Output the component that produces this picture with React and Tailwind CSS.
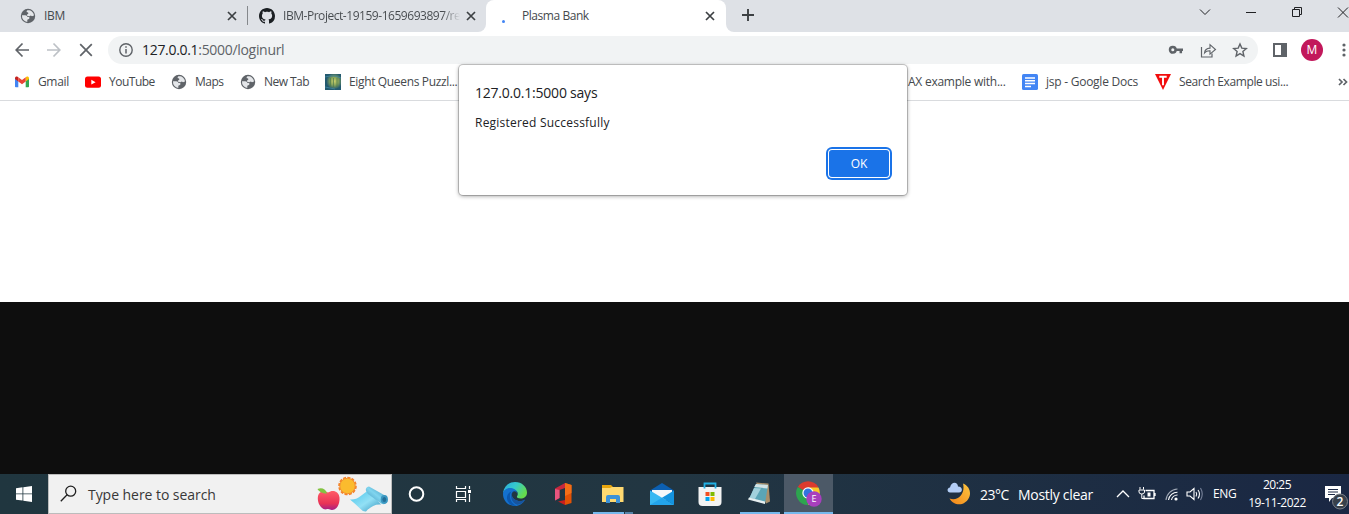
import React from "react";

const Globe = () => (
  <svg viewBox="0 0 16 16" className="h-4 w-4 shrink-0">
    <circle cx="8" cy="8" r="7.200" fill="#5f6368" />
    <path d="M2 7.300h3.200c1.500 0 2 .8 2.200 1.600l1.900.2v1.700l-2 .9v2.200A6 6 0 0 1 2 7.300z" fill="#e4e6e9" />
    <path d="M7 2.400c3.500-.7 6.500 1.500 7 5l-2 .9-1.200-.7-1.300.7-2.200-.3-.3-1.500 1.300-.8-.2-1.200-1.600-.4z" fill="#e4e6e9" />
  </svg>
);

const Close = () => (
  <svg viewBox="0 0 10 10" className="h-[10px] w-[10px] shrink-0">
    <path d="M1 1l8 8M9 1L1 9" stroke="#3c4043" strokeWidth="1.7" />
  </svg>
);

const GitHub = () => (
  <svg viewBox="0 0 16 16" className="h-4 w-4 shrink-0">
    <path fill="#1b1f23" d="M8 0C3.58 0 0 3.580 0 8c0 3.540 2.290 6.530 5.470 7.590.4.070.55-.170.55-.380 0-.190-.010-.820-.010-1.490-2.010.370-2.530-.490-2.690-.940-.090-.230-.480-.940-.820-1.130-.280-.150-.680-.520-.010-.530.630-.010 1.080.580 1.230.820.720 1.210 1.870.870 2.330.660.070-.520.280-.870.510-1.070-1.780-.200-3.640-.890-3.640-3.950 0-.870.310-1.590.820-2.150-.080-.200-.360-1.020.080-2.120 0 0 .670-.210 2.200.820.640-.180 1.320-.270 2-.270s1.360.090 2 .270c1.530-1.040 2.200-.820 2.200-.820.440 1.100.160 1.920.080 2.120.510.560.820 1.270.820 2.150 0 3.070-1.870 3.750-3.650 3.950.290.250.540.730.540 1.480 0 1.070-.010 1.930-.010 2.200 0 .210.150.460.550.380A8.010 8.010 0 0 0 16 8c0-4.420-3.580-8-8-8z" />
  </svg>
);

const Gmail = () => (
  <svg viewBox="0 0 16 16" className="h-4 w-4 shrink-0">
    <path d="M1 4v8.500q0 .8.8.8H4.300V6.700z" fill="#4285f4" />
    <path d="M15 4v8.500q0 .8-.8.8H11.700V6.700z" fill="#34a853" />
    <path d="M1 4.500v-.3C1 2.600 2.700 2 3.800 2.900L4.300 3.300V7.500L1 5z" fill="#c5221f" />
    <path d="M15 4.500v-.3c0-1.600-1.700-2.200-2.800-1.300l-.5.400V7.500L15 5z" fill="#fbbc04" />
    <path d="M4.300 3.300L8 6.100l3.700-2.800v4.200L8 10.300 4.300 7.500z" fill="#ea4335" />
  </svg>
);

const YouTube = () => (
  <svg viewBox="0 0 16 16" className="h-4 w-4 shrink-0">
    <rect x="0" y="2.500" width="16" height="11.300" rx="2.500" fill="#f00" />
    <path d="M6.300 5.700v4.900l4.300-2.450z" fill="#fff" />
  </svg>
);

const Queens = () => (
  <svg viewBox="0 0 16 16" className="h-4 w-4 shrink-0">
    <defs>
      <radialGradient id="glow" cx=".58" cy=".45" r=".5">
        <stop offset="0" stopColor="#c9cf6c" />
        <stop offset=".5" stopColor="#86a35a" />
        <stop offset="1" stopColor="#235a70" />
      </radialGradient>
    </defs>
    <rect width="16" height="16" fill="url(#glow)" />
    <path d="M0 3l5-1 5 0 6 2M0 13l5 1 5 1" fill="none" stroke="#4186a0" strokeWidth=".8" />
    <path d="M5.500 4v9M8.500 4v9M12 4v9" stroke="#4c7a4c" strokeWidth=".7" />
  </svg>
);

const Docs = () => (
  <svg viewBox="0 0 16 16" className="h-4 w-4 shrink-0">
    <rect width="16" height="16" rx="1.600" fill="#4285f4" />
    <path d="M3 4h10M3 6.800h10M3 9.600h10M3 12.400h6" stroke="#fff" strokeWidth="1.500" />
  </svg>
);

const TutorialMark = () => (
  <svg viewBox="0 0 16 16" className="h-4 w-4 shrink-0">
    <path d="M0 0h16L8 16z" fill="#f20d0d" />
    <path d="M4.300 2.800h7.400M8 2.800v8.500" stroke="#fff" strokeWidth="1.900" />
  </svg>
);

function Bookmark({ icon, label, width, tracking }) {
  return (
    <div className={`flex shrink-0 items-center gap-2 ${width}`}>
      {icon}
      <span className={`whitespace-nowrap ${tracking}`}>{label}</span>
    </div>
  );
}

function TabStrip() {
  return (
    <div className="flex h-8 bg-white text-[12px] text-[#45494d]">
      <div className="flex w-[486px] rounded-br-lg bg-[#dee1e6]">
        <div className="flex h-[31px] w-[247px] items-center pr-[10px] pl-5">
          <Globe />
          <span className="ml-2 flex-1 tracking-[-0.3px]">IBM</span>
          <Close />
        </div>
        <div className="mt-[6px] h-[19px] w-px bg-[#85888c]" />
        <div className="flex h-[31px] flex-1 items-center pr-[10px] pl-[11px]">
          <GitHub />
          <span className="ml-2 bg-gradient-to-r from-[#45494d] from-90% to-[#dee1e6] bg-clip-text whitespace-nowrap text-transparent tracking-[-0.46px]">
            IBM-Project-19159-1659693897/re
          </span>
          <span className="flex-1" />
          <Close />
        </div>
      </div>
      <div className="flex w-[240px] bg-[#dee1e6]">
        <div className="flex h-8 w-full items-center rounded-t-lg bg-white pr-[11px] pb-px pl-4">
          <span className="mt-[12px] h-[3px] w-[3px] rounded-full bg-[#4285f4]" />
          <span className="ml-[17px] flex-1 tracking-[-0.45px]">Plasma Bank</span>
          <Close />
        </div>
      </div>
      <div className="flex flex-1 rounded-bl-lg bg-[#dee1e6] pl-[16px]">
        <svg viewBox="0 0 12 12" className="mt-[9px] h-3 w-3">
          <path d="M6 0v12M0 6h12" stroke="#3c4043" strokeWidth="1.900" />
        </svg>
        <span className="flex-1" />
        <svg viewBox="0 0 150 24" className="h-6 w-[150px]" fill="none" stroke="#202124">
          <path d="M1 9.500l5 5 5-5" />
          <path d="M47 12.500h10" />
          <path d="M93.500 9.500h7v7h-7zM95.500 9.500v-2h7v7h-2" />
          <path d="M139 7.500l10 10M149 7.500l-10 10" />
        </svg>
      </div>
    </div>
  );
}

function AddressBar() {
  return (
    <div className="flex h-9 items-center bg-white pl-[15px]">
      <svg viewBox="0 0 80 16" className="h-4 w-20" fill="none" strokeWidth="1.700">
        <path d="M14 8H1.500M7.500 1.500L1.200 8l6.300 6.500" stroke="#5f6368" />
        <path d="M32 8h12.500M38.500 1.500L44.800 8l-6.300 6.500" stroke="#bdc1c6" />
        <path d="M65.200 2.200l11.600 11.600M76.800 2.200L65.200 13.800" stroke="#5f6368" />
      </svg>
      <div className="ml-[13px] flex h-7 w-[1150px] items-center rounded-full bg-[#f1f3f4] pl-[11px]">
        <svg viewBox="0 0 14 14" className="h-[14px] w-[14px]" fill="none" stroke="#5f6368">
          <circle cx="7" cy="7" r="6.200" strokeWidth="1.400" />
          <path d="M7 6v4.500M7 3.300v1.500" strokeWidth="1.500" />
        </svg>
        <span className="mb-px ml-[9px] flex-1 text-[14px] tracking-[-0.31px] text-[#5f6368]">
          <span className="text-[#202124]">127.0.0.1</span>:5000/loginurl
        </span>
        <svg viewBox="0 0 90 20" className="h-5 w-[90px]" fill="none" stroke="#5f6368">
          <circle cx="4.800" cy="9.800" r="2.800" strokeWidth="2.500" />
          <path d="M8 9.800h7M12.800 9.800v3.400" strokeWidth="2.500" />
          <path d="M33.500 7v10h10.500v-3.500" strokeWidth="1.200" />
          <path d="M36.500 13q.5-4.700 5.500-4.900V4.700l5.500 4.800-5.500 4.600v-3.300q-3.500-.2-5.500 2.200z" strokeWidth="1.100" />
          <path d="M72 4l1.800 4.100 4.500.4-3.400 3 1 4.500-3.900-2.400-3.900 2.400 1-4.500-3.400-3 4.500-.4z" strokeWidth="1.400" />
        </svg>
      </div>
      <svg viewBox="0 0 14 14" className="ml-[15px] h-[14px] w-[14px]">
        <path d="M0 0h14v14H0zM2 2v10h6V2z" fill="#5f6368" fillRule="evenodd" />
      </svg>
      <span className="ml-[14px] flex h-[22px] w-[22px] items-center justify-center rounded-full bg-[#c2185b] text-[12px] font-medium text-white">
        M
      </span>
      <svg viewBox="0 0 4 14" className="ml-[19px] h-[14px] w-1" fill="#5f6368">
        <circle cx="2" cy="2" r="1.600" />
        <circle cx="2" cy="7" r="1.600" />
        <circle cx="2" cy="12" r="1.600" />
      </svg>
    </div>
  );
}

function Bookmarks() {
  return (
    <div className="flex h-[33px] items-center border-b border-[#d9dbde] bg-white pb-[4px] pl-[14px] text-[12px] text-[#45494d]">
      <Bookmark icon={<Gmail />} label="Gmail" width="w-[71px]" tracking="tracking-[-0.35px]" />
      <Bookmark icon={<YouTube />} label="YouTube" width="w-[86px]" tracking="tracking-[-0.5px]" />
      <Bookmark icon={<Globe />} label="Maps" width="w-[69px]" tracking="tracking-[-0.5px]" />
      <Bookmark icon={<Globe />} label="New Tab" width="w-[85px]" tracking="tracking-[-0.55px]" />
      <Bookmark icon={<Queens />} label="Eight Queens Puzzl..." width="w-[581px]" tracking="tracking-[-0.35px]" />
      <div className="w-[116px] shrink-0 pl-[2px] whitespace-nowrap tracking-[-0.25px]">AX example with...</div>
      <Bookmark icon={<Docs />} label="jsp - Google Docs" width="w-[133px]" tracking="tracking-[-0.25px]" />
      <Bookmark icon={<TutorialMark />} label="Search Example usi..." width="w-[183px]" tracking="tracking-[-0.4px]" />
      <svg viewBox="0 0 10 8" className="h-2 w-[10px]" fill="none" stroke="#5f6368" strokeWidth="1.700">
        <path d="M1 1l3 3-3 3M5.500 1l3 3-3 3" />
      </svg>
    </div>
  );
}

function AlertDialog() {
  return (
    <div className="absolute top-[65px] left-[459px] flex h-[130px] w-[448px] flex-col rounded-[4px] bg-white px-4 pt-[18px] pb-4 text-[#202124] shadow-[0_0_0_1px_rgba(0,0,0,0.18),0_1px_4px_rgba(0,0,0,0.4)]">
      <h1 className="text-[14px] leading-5 tracking-[-0.22px]">127.0.0.1:5000 says</h1>
      <p className="mt-[11px] text-[12px] leading-[18px] tracking-[0.22px]">Registered Successfully</p>
      <button className="mt-[18px] mr-[2px] flex h-[27px] w-[60px] shrink-0 items-center justify-center self-end rounded-[3px] bg-[#1a73e8] text-[12px] text-white shadow-[0_0_0_1px_#fff,0_0_0_3px_#1a73e8]">
        OK
      </button>
    </div>
  );
}

function Slot({ children, active, bar }) {
  return (
    <div className={`flex h-10 w-[49px] shrink-0 flex-col items-center ${active ? "bg-[#4c5967]" : ""}`}>
      <div className="flex h-[38px] items-center pt-[2px]">{children}</div>
      {bar}
    </div>
  );
}

const SearchArt = () => (
  <svg viewBox="0 0 74 38" className="mr-[1px] h-[38px] w-[74px]">
    <defs>
      <linearGradient id="apple" x1="0" y1="0" x2="0" y2="1">
        <stop offset="0" stopColor="#ff5d68" />
        <stop offset=".65" stopColor="#e93355" />
        <stop offset="1" stopColor="#a51f86" />
      </linearGradient>
      <linearGradient id="mat" x1="0" y1="0" x2="1" y2="1">
        <stop offset="0" stopColor="#48c4ea" />
        <stop offset=".55" stopColor="#92e0f5" />
        <stop offset="1" stopColor="#3292bc" />
      </linearGradient>
      <linearGradient id="roll" x1="1" y1="0" x2="0" y2="1">
        <stop offset="0" stopColor="#2e86ae" />
        <stop offset=".5" stopColor="#80d5ef" />
        <stop offset="1" stopColor="#2f86b0" />
      </linearGradient>
    </defs>
    <circle cx="31.500" cy="11" r="8.300" fill="none" stroke="#f5822b" strokeWidth="2" strokeDasharray="3 1.300" />
    <circle cx="31.500" cy="11" r="7.700" fill="#fbbb2e" stroke="#f2902e" />
    <path d="M12 17.500c5-3.500 11-1 11.500 5 .5 7-3 12.500-7.500 12.500-2 0-2-1-4-1s-2 1-4.500 0c-4-2-6.500-8-5.500-13 1-5 6-6 10-3.500z" fill="url(#apple)" />
    <path d="M11 18.500C6 18.500 3 16.500 1.500 14c4-1.500 8-.500 9.500 4.500z" fill="#82c341" />
    <path d="M34 24.500q6 .5 10-3l8-6 13 14q-8-1-15 7-3 .5-6-3-4-4-10-9z" fill="url(#mat)" />
    <path d="M50 16q-1-4 3-4.500l16 9q4 3 2 6.500-2 3.500-6 1.500L52 19z" fill="url(#roll)" />
    <ellipse cx="68.300" cy="24.500" rx="3.600" ry="4.400" fill="#3b97c1" />
    <ellipse cx="68.300" cy="24.500" rx="1.900" ry="2.600" fill="#236f98" />
  </svg>
);

function Taskbar() {
  return (
    <div className="flex h-10 bg-gradient-to-r from-[#20363f] via-[#223642] to-[#1a2743] text-white">
      <div className="flex w-12 items-center justify-center">
        <svg viewBox="0 0 16 16" className="h-4 w-4" fill="#fff">
          <path d="M0 2.200l6.500-.9v6.200H0zM7.300 1.200L16 0v7.500H7.300zM0 8.300h6.500v6.300L0 13.700zM7.300 8.300H16V16l-8.700-1.200z" />
        </svg>
      </div>
      <div className="flex w-[344px] items-center border border-[#bcbcbc] bg-[#f1f1f1] pl-[11px]">
        <svg viewBox="0 0 17 17" className="mt-[-1px] h-[17px] w-[17px]" fill="none" stroke="#1f1f1f" strokeWidth="1.300">
          <circle cx="10.700" cy="6.200" r="5" />
          <path d="M7.100 9.800L.8 16.200" />
        </svg>
        <span className="mt-px ml-[11px] flex-1 text-[14px] tracking-[-0.05px] whitespace-nowrap text-[#383838]">Type here to search</span>
        <SearchArt />
      </div>

      <Slot>
        <svg viewBox="0 0 18 18" className="h-[18px] w-[18px]">
          <circle cx="8.500" cy="9" r="6.800" fill="none" stroke="#fff" strokeWidth="2" />
        </svg>
      </Slot>
      <Slot>
        <svg viewBox="0 0 18 16" className="mr-[3px] h-4 w-[18px]" fill="none" stroke="#fff" strokeWidth="1.200">
          <path d="M1.500 5.500h9v6h-9zM1.500 0v2.500h9V0M1.500 16v-2.500h9V16M14.500 0v3M14.500 8v8" />
          <path d="M13 4h3v3h-3z" fill="#fff" stroke="none" />
        </svg>
      </Slot>
      <Slot>
        <svg viewBox="0 0 24 24" className="h-6 w-6">
          <defs>
            <linearGradient id="edgeTop" x1="0" y1="0" x2="1" y2=".5">
              <stop offset="0" stopColor="#2aa9dd" />
              <stop offset=".5" stopColor="#35c9cd" />
              <stop offset="1" stopColor="#65dc4c" />
            </linearGradient>
          </defs>
          <path d="M0 11C1 4 6 0 12 0c7 0 12 5 12 10.500 0 4-3 6-6.500 6-2.500 0-4-1-3.500-2.200 1.500-2 1-5.800-3-6.600C6 7 1 9 0 11z" fill="url(#edgeTop)" />
          <path d="M0 12c0-4 4-6.500 8-6 4 .4 6.500 3 6.300 6-.2-1.500-1.300-2.700-3-2.700-3 0-4 5 0 8 3.500 2.600 8 2 10.700.200C20 21.500 16.500 24 12 24 5 24 0 18.500 0 12z" fill="#1471ce" />
          <path d="M8.500 9.500c-3 3-2 11 5 14.300-5 .7-9-3-9.500-7-.4-3.500 1.500-6.500 4.500-7.300z" fill="#0b57ad" />
          <path d="M11.500 9.300c-3 0-4 5 0 8 3.500 2.600 8 2 10.700.200q-3 5-8 5.300c-6-1.500-8.500-11-2.700-13.500z" fill="#17549e" />
        </svg>
      </Slot>
      <Slot>
        <svg viewBox="0 0 18 22" className="mr-[1px] h-[22px] w-[18px]">
          <path d="M11 0l6.500 2v18L11 22z" fill="#e35205" />
          <path d="M11 0v5L5.500 7v8L1 17.500V5.500z" fill="#c8283d" />
          <path d="M1 6l4.500 1v8L1 17.500z" fill="#e8557f" />
          <path d="M4 18.500L11 17v5z" fill="#c91e1e" />
          <path d="M11 0l6.500 2v8L11 13z" fill="#f46e17" />
        </svg>
      </Slot>
      <Slot
        bar={
          <div className="flex h-[2px] w-10 gap-px">
            <span className="w-[31px] bg-[#76b9ed]" />
            <span className="w-2 bg-[#5583a8]" />
          </div>
        }
      >
        <svg viewBox="0 0 22 20" className="h-5 w-[22px]">
          <path d="M0 1h9l2 2h10v4H0z" fill="#e8a50c" />
          <path d="M0 4h8l2-1h11.500v15H0z" fill="#ffd970" />
          <path d="M4 19v-6q0-2 2-2h10q2 0 2 2v6h-4v-4H8v4z" fill="#3c92d8" />
        </svg>
      </Slot>
      <Slot>
        <svg viewBox="0 0 24 22" className="h-[22px] w-6">
          <path d="M0 7.500L12 0l12 7.500v4H0z" fill="#0c5fb1" />
          <path d="M2 7h20v8L12 18 2 14z" fill="#f5f7fa" />
          <path d="M0 7.500L24 22H0z" fill="#39b8f2" />
          <path d="M24 7.500L12 14.800 24 22z" fill="#1493df" />
          <path d="M0 22l12-7.200L24 22z" fill="#23a4eb" />
        </svg>
      </Slot>
      <Slot>
        <svg viewBox="0 0 24 24" className="mr-[1px] h-6 w-6">
          <path d="M0.500 5h23v15q0 4-4 4h-15q-4 0-4-4z" fill="#f3f3f3" />
          <path d="M6.500 6.500V1.500h11v5" fill="none" stroke="#22b1e5" strokeWidth="1.800" />
          <path d="M7.500 10h4v4h-4z" fill="#f25022" />
          <path d="M12.500 10h4v4h-4z" fill="#7fba00" />
          <path d="M7.500 15h4v4h-4z" fill="#00a4ef" />
          <path d="M12.500 15h4v4h-4z" fill="#ffb900" />
        </svg>
      </Slot>
      <Slot bar={<div className="h-[2px] w-10 bg-[#76b9ed]" />}>
        <svg viewBox="0 0 24 24" className="mr-[2px] mb-[3px] h-6 w-6">
          <path d="M9 1.500l12.500 1 1.500 18-4 2z" fill="#a98f6b" />
          <path d="M9 3l12 1-3 18.500L2 18z" fill="#5ba5b6" />
          <path d="M9 3l12 1-.6 3.500L7.200 6z" fill="#d2e3e6" />
          <path d="M7 7l7 .5L8 18l-5.500-1z" fill="#a2d1dc" />
          <path d="M2 16.500l16 4v2.500L1 18.500z" fill="#e7eff0" />
        </svg>
      </Slot>
      <Slot active bar={<div className="h-[2px] w-full bg-[#76b9ed]" />}>
        <svg viewBox="0 0 26 26" className="h-[26px] w-[26px]">
          <path d="M12 12L1.800 6A11.900 11.900 0 0 1 22.300 6z" fill="#db3a2e" />
          <path d="M12 12L1.800 6A11.900 11.900 0 0 0 12 24l5-8z" fill="#2da44f" />
          <path d="M12 6.500h10.500A11.900 11.900 0 0 1 12 24l5-9z" fill="#fbc926" />
          <circle cx="12" cy="12" r="5.700" fill="#fff" />
          <circle cx="12" cy="12" r="4.500" fill="#3274df" />
          <circle cx="18" cy="18" r="7.700" fill="#a83fbd" />
          <text x="18" y="21.300" textAnchor="middle" fontSize="9" fill="#fff">E</text>
        </svg>
      </Slot>

      <div className="flex flex-1 items-center">
        <svg viewBox="0 0 24 24" className="ml-[114px] h-6 w-6">
          <defs>
            <linearGradient id="moon" x1="1" y1="0" x2="0" y2="1">
              <stop offset="0" stopColor="#fcc640" />
              <stop offset="1" stopColor="#f28419" />
            </linearGradient>
          </defs>
          <path d="M16 1.500c10 4 9 17-1 20.500-5 1.300-10-1-12.500-5.500 9 3 16-5 13.500-15z" fill="url(#moon)" />
          <path d="M3 10.500C0 10.500-.5 6 3 5.500 4-1 11-.5 11 4.500c5 0 5 6 1 6z" fill="#b3cef7" />
        </svg>
        <span className="ml-[9px] w-[38px] text-[14px] tracking-[-0.5px] whitespace-nowrap">23°C</span>
        <span className="w-[98px] text-[14px] tracking-[-0.3px] whitespace-nowrap">Mostly clear</span>
        <svg viewBox="0 0 90 18" className="h-[18px] w-[90px]" fill="none" stroke="#fff" strokeWidth="1.300">
          <path d="M1 12l6-6 6 6" />
          <path d="M29.500 5.500h8.500v8H28v-3M39 8v3" />
          <path d="M31.500 7.500h3v4h-3z" fill="#fff" stroke="none" />
          <path d="M24 2v2.500M27.500 2v2.500M23 5h5.500v2q0 2-2.700 2T23 7zM25.800 9v4.500H28" strokeWidth="1" />
          <g strokeWidth="1.100">
            <path d="M50 15A12 12 0 0 1 61.500 4" stroke="#a2aab7" />
            <path d="M52.500 15A9 9 0 0 1 61.500 7.200M55.500 15A6 6 0 0 1 61.500 10" />
          </g>
          <circle cx="60" cy="14" r="1.600" fill="#fff" stroke="none" />
          <path d="M71 7h3l4-3.500v11L74 11h-3zM80 7q1.500 2 0 4.500" strokeWidth="1.100" />
          <path d="M82 5q3 4 0 8.500" strokeWidth="1.100" />
          <path d="M84.500 3q3.500 6 0 12" stroke="#77829a" strokeWidth="1.100" />
        </svg>
        <span className="ml-[7px] w-[26px] text-[12px] tracking-[-0.4px]">ENG</span>
        <div className="ml-[5px] flex w-[66px] flex-col items-center text-[12px] leading-[18px] tracking-[-0.5px] whitespace-nowrap">
          <span>20:25</span>
          <span>19-11-2022</span>
        </div>
        <svg viewBox="0 0 38 38" className="mt-[2px] ml-auto h-[38px] w-[38px]">
          <path d="M14 10h16v12H21l-3 4v-4h-4z" fill="#fff" />
          <path d="M17 13.500h10M17 16h10M17 18.500h7" stroke="#1c2945" />
          <circle cx="29" cy="25.500" r="7.500" fill="#38404b" stroke="#7b818a" />
          <text x="29" y="30" textAnchor="middle" fontSize="12" fontWeight="600" fill="#fff">2</text>
        </svg>
      </div>
    </div>
  );
}

export default function App() {
  return (
    <div className="relative flex h-[514px] w-[1349px] flex-col overflow-hidden bg-white font-['Open_Sans','Noto_Sans',sans-serif]">
      <TabStrip />
      <AddressBar />
      <Bookmarks />
      <main className="h-[201px] bg-white" />
      <div className="h-[172px] bg-[#0e0e0e]" />
      <Taskbar />
      <AlertDialog />
    </div>
  );
}
